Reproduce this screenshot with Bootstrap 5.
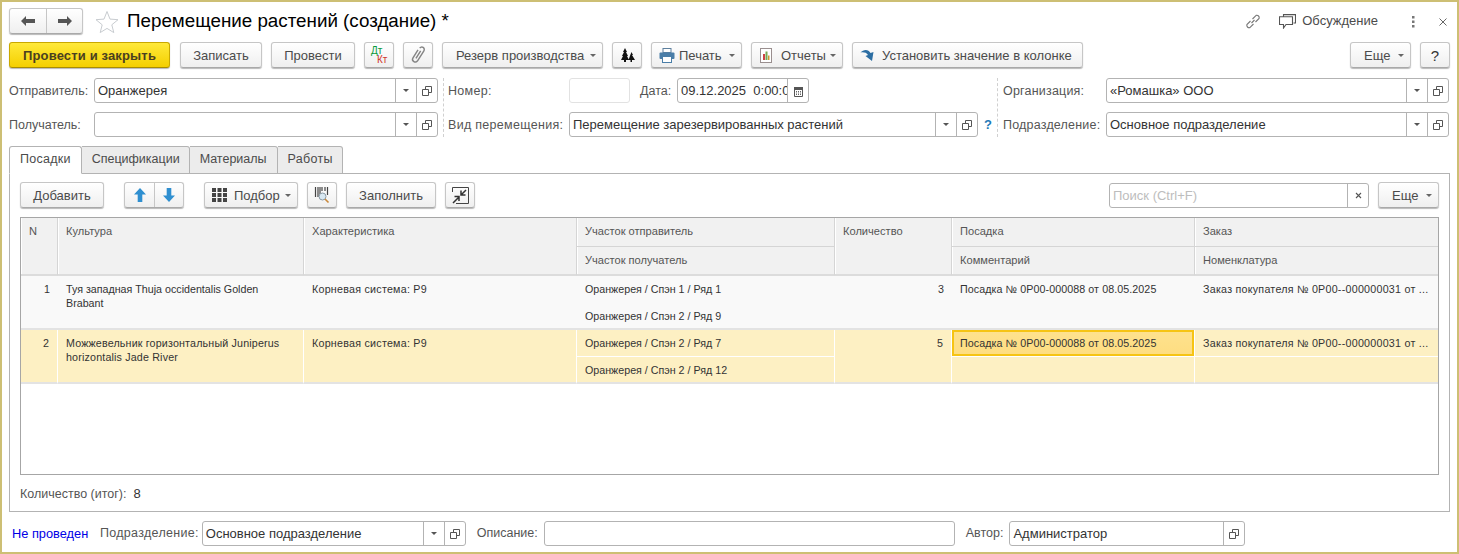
<!DOCTYPE html>
<html lang="ru">
<head>
<meta charset="UTF-8">
<title>Перемещение растений (создание)</title>
<meta name="viewport" content="width=device-width, initial-scale=1">
<link href="https://cdn.jsdelivr.net/npm/bootstrap@5.3.0/dist/css/bootstrap.min.css" rel="stylesheet">
<style>
    body { margin: 0; background: #fff; overflow: hidden; font-family: "Liberation Sans", Arial, sans-serif; font-size: 13px; color: #4b4b4b; }
    .win { width: 1459px; height: 554px; border: 2px solid #cdbf74; padding: 6px 7px 0 7px; background: #fff; }

    .title-row { height: 26px; margin-bottom: 8px; }
    .page-title { font-size: 18.8px; color: #000; margin: 0 0 0 8px; font-weight: 400; line-height: 26px; white-space: nowrap; }
    .star-ico { margin-left: 12px; }
    .link-ico { margin-top: 1px; }
    .chat-ico { margin: 1px 6px 0 18px; }
    .talk { color: #4b4b4b; font-size: 13px; margin: 0 33px 0 0; }
    .dots-ico { margin-top: 1px; }
    .close-ico { margin: 1px 3px 0 24px; }

    .ob { height: 26px; background: linear-gradient(#fff, #efefef); border: 1px solid #c6c6c6; border-bottom-color: #a9a9a9; border-radius: 3px; box-shadow: 0 1px 1px #b9b9b9; color: #4b4b4b; font-size: 13px; padding: 0 13px; white-space: nowrap; display: inline-flex; align-items: center; justify-content: center; line-height: 1; flex: none; }
    .ob-ico { width: 30px; padding: 0; }
    .ob-main { width: 161px; margin-right: 1px; background: linear-gradient(#ffe93a, #f4cf00); border-color: #c9a800; border-bottom-color: #a98d00; font-weight: 700; letter-spacing: .15px; color: #4a4020; }
    .ob-split { padding: 0; }
    .ob-split > span { width: 29px; height: 100%; display: flex; align-items: center; justify-content: center; }
    .ob-split > span + span { border-left: 1px solid #c6c6c6; }
    .ob-nav > span { width: 36px; }
    .ob-drop { justify-content: flex-start; padding: 0 6px 0 13px; }
    .ob-drop .caret-mark { margin-left: auto; }
    .ob-iconed { justify-content: flex-start; padding-left: 7px; }
    .ob-help { font-size: 15px; color: #333; }
    .ico-gap { margin-right: 7px; }
    .caret-mark { width: 0; height: 0; border: 3px solid transparent; border-top: 3.5px solid #666; border-bottom: 0; margin-left: 7px; }
    .tool-row { gap: 9px; height: 26px; }
    .w-rez { width: 161px; } .w-print { width: 91px; } .w-rep { width: 92px; } .w-set { width: 231px; }
    .w-more { width: 61px; } .w-add { width: 84px; } .w-pick { width: 94px; } .w-fill { width: 90px; }
    .w-rec { width: 82px; } .w-post { width: 84px; }
    .ob svg { flex: none; }

    .form-zone { margin-top: 10px; height: 59px; }
    .fld-row { height: 25px; margin-bottom: 9px; }
    .fld-lbl { color: #555; font-size: 12.5px; white-space: nowrap; flex: none; }
    .zone-a .fld-lbl, .zone-b .fld-lbl, .zone-c .fld-lbl { margin-top: 2px; }
    .fld { height: 25px; border: 1px solid #b3b3b3; border-radius: 3px; background: #fff; color: #333; font-size: 13px; display: flex; align-items: center; overflow: hidden; flex: none; }
    .fld-txt { flex: 1; padding-left: 3px; white-space: nowrap; overflow: hidden; }
    .fld-btn { width: 21px; height: 100%; border-left: 1px solid #b3b3b3; display: flex; align-items: center; justify-content: center; flex: none; }
    .fld-btn .caret-mark { margin: 0; border-top-color: #555; }
    .zone-a { width: 429px; }
    .zone-b { width: 554px; margin-left: 5px; padding: 0 5px 0 4px; border-left: 1px dashed #d0d0d0; }
    .zone-c { width: 452px; padding-left: 5px; border-left: 1px dashed #d0d0d0; }
    .lbl-a { width: 85px; } .lbl-b { width: 121px; letter-spacing: .3px; } .lbl-c { width: 103px; letter-spacing: .2px; }
    .num-fld { width: 61px; border-color: #e2e2e2; }
    .date-lbl { margin-left: 10px; width: 37px; }
    .date-fld { width: 132px; }
    .hint-mark { color: #1f7ab8; font-weight: 700; font-size: 13px; margin-left: 6px; }

    .tab-strip { margin-top: 9px; height: 28px; padding-left: 1px; position: relative; z-index: 1; }
    .tab-item { height: 28px; padding: 0 10px 2px; background: #ececec; border: 1px solid #b3b3b3; border-left: 0; color: #4b4b4b; font-size: 12.5px; display: flex; align-items: center; border-radius: 0 3px 0 0; }
    .tab-item.on { background: #fff; border-left: 1px solid #b3b3b3; border-bottom-color: #fff; border-radius: 3px 3px 0 0; margin-left: -1px; letter-spacing: .25px; }
    .tab-spec { padding-right: 9px; }
    .tab-last { padding-right: 9px; letter-spacing: .3px; }
    .tab-body { width: 1441px; height: 339px; margin-top: -1px; border: 1px solid #b3b3b3; padding: 8px 10px 0 10px; }

    .search-fld { width: 260px; height: 25px; margin-top: 1px; border-color: #b3b3b3; }
    .search-fld .fld-txt { color: #bdbdbd; padding-left: 3px; }
    .gap-big { margin-left: 11px; }

    .grid-box { margin-top: 9px; height: 258px; border: 1px solid #a6a6a6; overflow: hidden; }
    .doc-grid { table-layout: fixed; width: 1418px; border-collapse: separate; border-spacing: 0; font-size: 10.7px; color: #333; margin: 0; }
    .doc-grid th, .doc-grid td { height: 27px; padding: 6px 8px 0 8px; vertical-align: top; line-height: 14px; font-weight: 400; overflow: hidden; white-space: nowrap; text-overflow: ellipsis; }
    .doc-grid th { height: 29px; font-size: 11.1px; background: #f1f1f1; color: #555; border-right: 1px solid #d5d5d5; border-bottom: 2px solid #dcdcdc; box-shadow: inset 1px 0 0 #fff; }
    .doc-grid thead tr:first-child th.sub { border-bottom: 1px solid #d5d5d5; }
    .doc-grid td.wrap { white-space: normal; }
    .doc-grid td.qty { text-align: right; }
    .doc-grid td.ord-cell { letter-spacing: .25px; padding-right: 6px; }
    .doc-grid td.lot-cell { letter-spacing: .08px; }
    .doc-grid td.root-cell { letter-spacing: .25px; }
    .doc-grid td.long-cell { letter-spacing: .17px; }
    .row-plain td { background: #f9f9f9; }
    .row-sel td { background: #fdf0c3; border-right: 1px solid #fff; }
    .row-sel td.sub { border-bottom: 1px solid #fff; }
    .doc-grid td.row-end { border-bottom: 2px solid #e3e3e3; }
    .doc-grid td.cur-cell { background: linear-gradient(#fee28f, #fedd80); box-shadow: inset 0 0 0 2px #f6c414; }
    .c-n { width: 37px; } .c-cult { width: 246px; } .c-char { width: 273px; } .c-plot { width: 258px; } .c-qty { width: 117px; } .c-lot { width: 243px; } .c-ord { width: 244px; }
    .n-cell { text-align: right; }
    .doc-grid th.n-head { text-align: left; }
    .sum-row { margin-top: 12px; font-size: 12.5px; color: #555; line-height: 14px; }
    .sum-row b { font-weight: 400; font-size: 13px; color: #333; margin-left: 7px; }

    .foot-row { height: 25px; margin-top: 9px; padding-left: 3px; }
    .post-state { color: #0000e6; font-size: 12.8px; width: 88px; flex: none; }
    .foot-dep { letter-spacing: .3px; }
    .f-dep { width: 264px; margin-left: 3px; }
    .f-desc { width: 411px; margin-left: 6px; }
    .f-auth { width: 236px; margin-left: 6px; }
    .ml-11 { margin-left: 11px; }
</style>
</head>
<body>
<svg width="0" height="0" class="position-absolute">
    <defs>
        <symbol id="open-win" viewBox="0 0 10 10"><path d="M3.500 3.500V.5h6v6h-3M.5 3.500h6v6h-6z" fill="none" stroke="#555"/></symbol>
    </defs>
</svg>

<div class="win">
    <!-- заголовок -->
    <div class="title-row d-flex align-items-center">
        <div class="ob ob-split ob-nav">
            <span><svg width="14" height="10" viewBox="0 0 14 10"><path d="M0 5l5-5v3h9v4H5v3z" fill="#555"/></svg></span>
            <span><svg width="14" height="10" viewBox="0 0 14 10"><path d="M14 5L9 0v3H0v4h9v3z" fill="#555"/></svg></span>
        </div>
        <svg class="star-ico" width="24" height="23" viewBox="0 0 24 23"><path d="M12 1.500l3 7.600 8 .6-6.200 5.100 2 7.800L12 18.400 5.200 22.600l2-7.800L1 9.700l8-.6z" fill="#fff" stroke="#c8ccd0"/></svg>
        <h1 class="page-title">Перемещение растений (создание) *</h1>
        <div class="ms-auto d-flex align-items-center">
            <svg class="link-ico" width="16" height="15" viewBox="1.500 1.500 15 15" fill="none" stroke="#777" stroke-width="1.100"><path d="M7.500 10.500l3-3M6.500 8.500l-3.600 3.600a2.400 2.400 0 0 0 3 3l3.600-3.600M8.500 6.500l3.600-3.600a2.400 2.400 0 0 1 3 3l-3.600 3.600"/></svg>
            <svg class="chat-ico" width="17" height="15" viewBox="0 0 17 15" fill="none" stroke="#555" stroke-width="1.100"><path d="M4.500 2.500V.6h12v8.400h-2M.5 2.800h13v7.700H7l-2.500 3.500v-3.500H.5z"/></svg>
            <p class="talk mb-0">Обсуждение</p>
            <svg class="dots-ico" width="4" height="12" viewBox="0 0 4 12"><g fill="#777"><rect x="1" y="0" width="2.500" height="2.500"/><rect x="1" y="4.500" width="2.500" height="2.500"/><rect x="1" y="9" width="2.500" height="2.500"/></g></svg>
            <svg class="close-ico" width="8" height="8" viewBox="0 0 8 8"><path d="M.5.5l7 7M7.500.5l-7 7" stroke="#666"/></svg>
        </div>
    </div>

    <!-- командная панель -->
    <div class="tool-row d-flex">
        <button class="ob ob-main" type="button">Провести и закрыть</button>
        <button class="ob w-rec" type="button">Записать</button>
        <button class="ob w-post" type="button">Провести</button>
        <button class="ob ob-ico" type="button" aria-label="Дт Кт"><svg width="24" height="20" viewBox="0 0 24 20"><text x="4" y="9" font-size="10" font-family="Liberation Sans" fill="#0a9a3c">Дт</text><text x="10" y="18" font-size="10" font-family="Liberation Sans" fill="#d0342c">Кт</text></svg></button>
        <button class="ob ob-ico" type="button" aria-label="Файлы"><svg width="18" height="20" viewBox="0 0 16 18"><path transform="rotate(32 8 9)" d="M5.500 5v8.500a2.500 2.500 0 0 0 5 0V3a2.200 2.200 0 0 0-4.400 0M8 4.500v8" fill="none" stroke="#858585" stroke-width="1.300"/></svg></button>
        <button class="ob ob-drop w-rez" type="button">Резерв производства<i class="caret-mark"></i></button>
        <button class="ob ob-ico" type="button" aria-label="Растения"><svg width="15" height="14" viewBox="0 0 15 14"><path d="M5 0l2 4H6l2 4H7l2 4H6v2H4v-2H1l2-4H2l2-4H3zM11.500 4L13 7h-1l3 5h-3v2h-1.500v-2H8.500l1.800-5z" fill="#111"/></svg></button>
        <button class="ob ob-drop ob-iconed w-print" type="button"><svg class="me-1" width="16" height="15" viewBox="0 0 16 15"><rect x="4" y=".5" width="8" height="4" fill="#fff" stroke="#5c7f9d"/><rect x=".5" y="4.500" width="15" height="6.500" rx="1" fill="#4a7ea8"/><rect x="3.500" y="8.500" width="9" height="6" fill="#fff" stroke="#4a7ea8"/></svg>Печать<i class="caret-mark"></i></button>
        <button class="ob ob-drop ob-iconed w-rep" type="button"><svg class="me-2" width="14" height="15" viewBox="0 0 14 15"><rect x="1.500" y=".5" width="11" height="14" fill="#fff" stroke="#9a8f8f"/><rect x="4" y="6" width="2" height="6" fill="#c44"/><rect x="6.500" y="3.500" width="2" height="8.500" fill="#7a5"/><rect x="9" y="7.500" width="1.500" height="4.500" fill="#c93"/></svg>Отчеты<i class="caret-mark"></i></button>
        <button class="ob ob-iconed w-set" type="button"><svg class="ico-gap" width="15" height="13" viewBox="0 0 14 13"><path d="M0 3.500C3 0 8 0 10 4l3-1-1.500 9L5 7l2.500-1C6 3.500 3 3 0 3.500z" fill="#2c6ea3"/></svg>Установить значение в колонке</button>
        <button class="ob ob-drop w-more ms-auto" type="button">Еще<i class="caret-mark"></i></button>
        <button class="ob ob-ico ob-help" type="button">?</button>
    </div>

    <!-- реквизиты -->
    <div class="form-zone d-flex">
        <div class="zone-a">
            <div class="fld-row d-flex align-items-center">
                <label class="fld-lbl lbl-a">Отправитель:</label>
                <div class="fld flex-fill"><span class="fld-txt">Оранжерея</span><span class="fld-btn"><i class="caret-mark"></i></span><span class="fld-btn"><svg width="10" height="10"><use href="#open-win"/></svg></span></div>
            </div>
            <div class="fld-row d-flex align-items-center">
                <label class="fld-lbl lbl-a">Получатель:</label>
                <div class="fld flex-fill"><span class="fld-txt"></span><span class="fld-btn"><i class="caret-mark"></i></span><span class="fld-btn"><svg width="10" height="10"><use href="#open-win"/></svg></span></div>
            </div>
        </div>
        <div class="zone-b">
            <div class="fld-row d-flex align-items-center">
                <label class="fld-lbl lbl-b">Номер:</label>
                <div class="fld num-fld"></div>
                <label class="fld-lbl date-lbl">Дата:</label>
                <div class="fld date-fld"><span class="fld-txt">09.12.2025&nbsp; 0:00:00</span><span class="fld-btn"><svg width="9" height="12" viewBox="0 0 9 12"><path d="M.5 2.500h8v9h-8z" fill="#fff" stroke="#555"/><rect x="0" y="2" width="9" height="3" fill="#555"/><path d="M2 6.500h5M2 8h5M2 9.500h5" stroke="#666" stroke-dasharray="1 1"/></svg></span></div>
            </div>
            <div class="fld-row d-flex align-items-center">
                <label class="fld-lbl lbl-b">Вид перемещения:</label>
                <div class="fld flex-fill"><span class="fld-txt">Перемещение зарезервированных растений</span><span class="fld-btn"><i class="caret-mark"></i></span><span class="fld-btn"><svg width="10" height="10"><use href="#open-win"/></svg></span></div>
                <span class="hint-mark">?</span>
            </div>
        </div>
        <div class="zone-c">
            <div class="fld-row d-flex align-items-center">
                <label class="fld-lbl lbl-c">Организация:</label>
                <div class="fld flex-fill"><span class="fld-txt">«Ромашка» ООО</span><span class="fld-btn"><i class="caret-mark"></i></span><span class="fld-btn"><svg width="10" height="10"><use href="#open-win"/></svg></span></div>
            </div>
            <div class="fld-row d-flex align-items-center">
                <label class="fld-lbl lbl-c">Подразделение:</label>
                <div class="fld flex-fill"><span class="fld-txt">Основное подразделение</span><span class="fld-btn"><i class="caret-mark"></i></span><span class="fld-btn"><svg width="10" height="10"><use href="#open-win"/></svg></span></div>
            </div>
        </div>
    </div>

    <!-- вкладки -->
    <div class="tab-strip d-flex">
        <div class="tab-item on">Посадки</div>
        <div class="tab-item tab-spec">Спецификации</div>
        <div class="tab-item">Материалы</div>
        <div class="tab-item tab-last">Работы</div>
    </div>
    <div class="tab-body">
        <div class="tool-row d-flex">
            <button class="ob w-add" type="button">Добавить</button>
            <div class="ob ob-split gap-big">
                <span><svg width="12" height="14" viewBox="0 0 13 15"><path d="M6.500 0L13 7H9v8H4V7H0z" fill="#2f8fd0"/></svg></span>
                <span><svg width="12" height="14" viewBox="0 0 13 15"><path d="M6.500 15L13 8H9V0H4v8H0z" fill="#2f8fd0"/></svg></span>
            </div>
            <button class="ob ob-drop ob-iconed w-pick gap-big" type="button"><svg class="ico-gap" width="15" height="14" viewBox="0 0 15 14"><g fill="#444"><rect width="4" height="4"/><rect x="5.500" width="4" height="4"/><rect x="11" width="4" height="4"/><rect y="5" width="4" height="4"/><rect x="5.500" y="5" width="4" height="4"/><rect x="11" y="5" width="4" height="4"/><rect y="10" width="4" height="4"/><rect x="5.500" y="10" width="4" height="4"/><rect x="11" y="10" width="4" height="4"/></g></svg>Подбор<i class="caret-mark"></i></button>
            <button class="ob ob-ico" type="button" aria-label="Штрихкод"><svg width="16" height="17" viewBox="0 0 16 17"><path d="M1.500 0v10M4 0v10M6 0v7M8 0v4M11 0v4M13.500 0v8" stroke="#444" stroke-width="1.200"/><circle cx="8.500" cy="9.500" r="3.500" fill="#d8e8f2" stroke="#8a9aa5"/><path d="M11 12l3.500 3.500" stroke="#c9883a" stroke-width="1.600"/></svg></button>
            <button class="ob w-fill" type="button">Заполнить</button>
            <button class="ob ob-ico" type="button" aria-label="Свернуть"><svg width="17" height="17" viewBox="0 0 17 17"><path d="M.5 5V.5h16v16H4" fill="none" stroke="#444"/><path d="M14 3L9.500 7.500M9 3.500V8h4.500M1 16l5.500-5.500M2.500 9.500H7V14" fill="none" stroke="#333" stroke-width="1.500"/></svg></button>
            <div class="fld search-fld ms-auto"><span class="fld-txt">Поиск (Ctrl+F)</span><span class="fld-btn"><svg width="7" height="7" viewBox="0 0 7 7"><path d="M1 1l5 5M6 1L1 6" stroke="#555" stroke-width="1.100"/></svg></span></div>
            <button class="ob ob-drop w-more" type="button">Еще<i class="caret-mark"></i></button>
        </div>

        <div class="grid-box">
            <table class="doc-grid">
                <colgroup><col class="c-n"><col class="c-cult"><col class="c-char"><col class="c-plot"><col class="c-qty"><col class="c-lot"><col class="c-ord"></colgroup>
                <thead>
                    <tr>
                        <th rowspan="2" class="n-head">N</th>
                        <th rowspan="2">Культура</th>
                        <th rowspan="2">Характеристика</th>
                        <th class="sub">Участок отправитель</th>
                        <th rowspan="2">Количество</th>
                        <th class="sub">Посадка</th>
                        <th class="sub">Заказ</th>
                    </tr>
                    <tr>
                        <th>Участок получатель</th>
                        <th>Комментарий</th>
                        <th>Номенклатура</th>
                    </tr>
                </thead>
                <tbody>
                    <tr class="row-plain">
                        <td rowspan="2" class="n-cell row-end">1</td>
                        <td rowspan="2" class="wrap row-end">Туя западная Thuja occidentalis Golden Brabant</td>
                        <td rowspan="2" class="row-end root-cell">Корневая система: Р9</td>
                        <td>Оранжерея / Спэн 1 / Ряд 1</td>
                        <td rowspan="2" class="qty row-end">3</td>
                        <td class="lot-cell">Посадка № 0Р00-000088 от 08.05.2025</td>
                        <td class="ord-cell">Заказ покупателя № 0Р00--000000031 от ...</td>
                    </tr>
                    <tr class="row-plain">
                        <td class="row-end">Оранжерея / Спэн 2 / Ряд 9</td>
                        <td class="row-end"></td>
                        <td class="row-end"></td>
                    </tr>
                    <tr class="row-sel">
                        <td rowspan="2" class="n-cell row-end">2</td>
                        <td rowspan="2" class="wrap row-end long-cell">Можжевельник горизонтальный Juniperus horizontalis Jade River</td>
                        <td rowspan="2" class="row-end root-cell">Корневая система: Р9</td>
                        <td class="sub">Оранжерея / Спэн 2 / Ряд 7</td>
                        <td rowspan="2" class="qty row-end">5</td>
                        <td class="sub cur-cell lot-cell">Посадка № 0Р00-000088 от 08.05.2025</td>
                        <td class="sub ord-cell">Заказ покупателя № 0Р00--000000031 от ...</td>
                    </tr>
                    <tr class="row-sel">
                        <td class="row-end">Оранжерея / Спэн 2 / Ряд 12</td>
                        <td class="row-end"></td>
                        <td class="row-end"></td>
                    </tr>
                </tbody>
            </table>
        </div>
        <div class="sum-row">Количество (итог):<b>8</b></div>
    </div>

    <!-- подвал -->
    <div class="foot-row d-flex align-items-center">
        <span class="post-state">Не проведен</span>
        <label class="fld-lbl foot-dep">Подразделение:</label>
        <div class="fld f-dep"><span class="fld-txt">Основное подразделение</span><span class="fld-btn"><i class="caret-mark"></i></span><span class="fld-btn"><svg width="10" height="10"><use href="#open-win"/></svg></span></div>
        <label class="fld-lbl ml-11">Описание:</label>
        <div class="fld f-desc"></div>
        <label class="fld-lbl ml-11">Автор:</label>
        <div class="fld f-auth"><span class="fld-txt">Администратор</span><span class="fld-btn"><svg width="10" height="10"><use href="#open-win"/></svg></span></div>
    </div>
</div>
<script src="https://cdn.jsdelivr.net/npm/bootstrap@5.3.0/dist/js/bootstrap.bundle.min.js"></script>
</body>
</html>
